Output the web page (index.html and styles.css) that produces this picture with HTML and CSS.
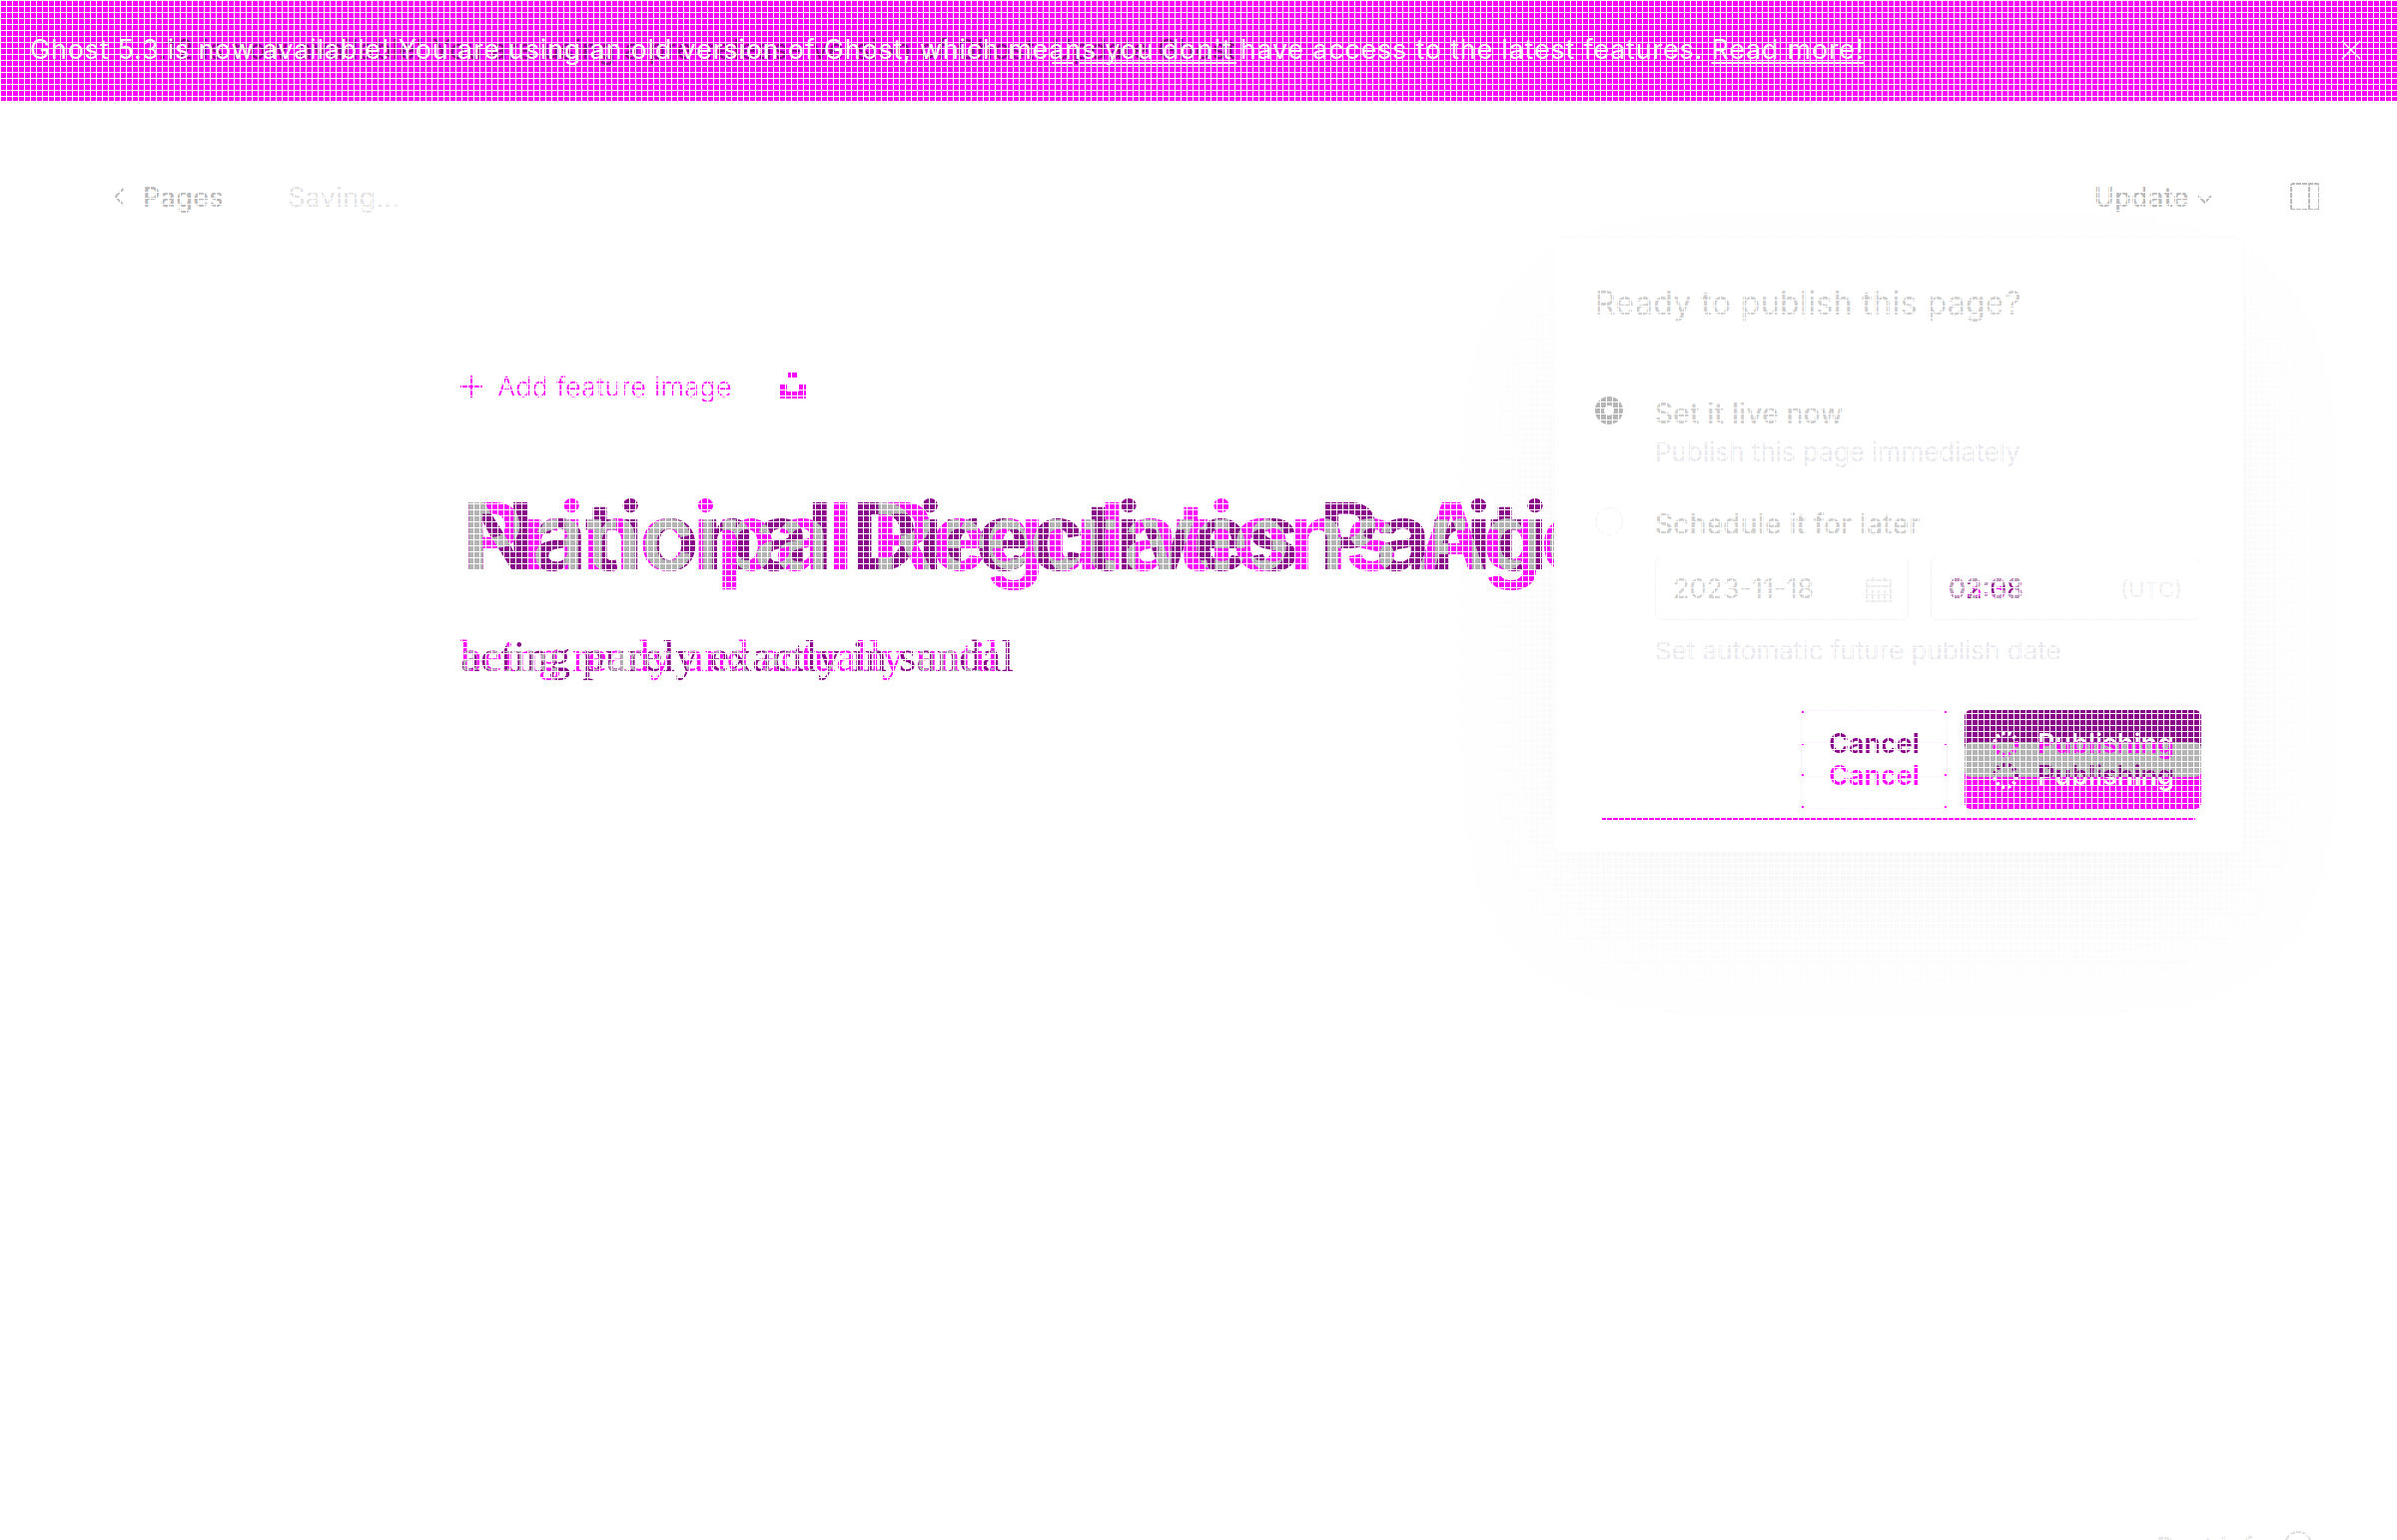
FILE: index.html
```html
<!DOCTYPE html>
<html lang="en">
<head>
  <meta charset="UTF-8">
  <title>Ready to publish this page?</title>
  <link rel="stylesheet" href="styles.css">
</head>
<body>

<!-- maps red = old ink, blue = new ink to the purple / magenta / grey of the diff -->
<svg class="defs" width="0" height="0" aria-hidden="true">
  <filter id="diff" x="0" y="0" width="1" height="1" color-interpolation-filters="sRGB">
    <feColorMatrix in="SourceGraphic" values="1 0 0 0 0  1 0 0 0 0  1 0 0 0 0  0 0 0 1 0" result="aa"/>
    <feColorMatrix in="SourceGraphic" values="0 0 1 0 0  0 0 1 0 0  0 0 1 0 0  0 0 0 1 0" result="bb"/>
    <feComposite in="aa" in2="bb" operator="arithmetic" k1="1" k2="0" k3="0" k4="0" result="both"/>
    <feColorMatrix in="both" values="0 0 0 0 0  0 1 0 0 0  0 0 0 0 0  0 0 0 1 0" result="green"/>
    <feComposite in="SourceGraphic" in2="green" operator="arithmetic" k1="0" k2="1" k3="1" k4="0" result="mix"/>
    <feColorMatrix in="mix" values="-.455 .161 0 0 1  -1 1.706 -1 0 1  -.455 .161 0 0 1  0 0 0 1 0"/>
  </filter>
</svg>

<div class="banner">
  <div class="stack banner-text">
    <p class="old">Ghost 5.3.12 is now available! You are using a pre-release version of Ghost. <u>Update Ghost</u></p>
    <p class="new">Ghost 5.3 is now available! You are using an old version of Ghost, which means you don't have access to the latest features. <u>Read more!</u></p>
  </div>
  <svg class="banner-close" viewBox="0 0 22 22"><path d="M1 1l20 20M21 1L1 21"/></svg>
</div>

<header class="topbar">
  <div class="topbar-left">
    <svg class="back" viewBox="0 0 10 18"><path d="M9 1L1 9l8 8"/></svg>
    <span class="back-label">Pages</span>
    <span class="saving">Saving...</span>
  </div>
  <div class="topbar-right">
    <span class="update">Update</span>
    <svg class="update-caret" viewBox="0 0 14 9"><path d="M1 1l6 6 6-6"/></svg>
    <svg class="sidebar-toggle" viewBox="0 0 30 28"><rect x="1" y="1" width="28" height="26" rx="2"/><path d="M19 1v26"/></svg>
  </div>
</header>

<main class="editor ink">
  <div class="feature new">
    <svg class="feature-plus" viewBox="0 0 22 22"><path d="M11 0v22M0 11h22"/></svg>
    <span>Add feature image</span>
    <svg class="feature-icon" viewBox="0 0 26 27"><path d="M8 0h9v6H8zM0 12h7v8h12v-8h7v15H0z"/></svg>
  </div>
  <div class="stack title">
    <h1 class="old">National Directives Parities</h1>
    <h1 class="new">Principal Regulations Agencies</h1>
  </div>
  <div class="stack lead">
    <p class="old">acting purely exactly in sandal</p>
    <p class="new">being ready and actually until</p>
  </div>
</main>

<aside class="publish">
  <h2 class="publish-title">Ready to publish this page?</h2>
  <div class="publish-body">
    <div class="option">
      <span class="radio radio-on"></span>
      <div>
        <div class="option-name">Set it live now</div>
        <div class="option-desc">Publish this page immediately</div>
      </div>
    </div>
    <div class="option option-later">
      <span class="radio"></span>
      <div>
        <div class="option-name">Schedule it for later</div>
        <div class="fields">
          <div class="field field-date">
            <span>2023-11-18</span>
            <svg class="calendar" viewBox="0 0 26 26"><path d="M1 4h24v21H1zM1 10h24M7 1v5M19 1v5M7 14v9M13 14v9M19 14v9M1 18h24"/></svg>
          </div>
          <div class="field field-time">
            <span class="stack ink time">
              <span class="old">02:08</span>
              <span class="new">03:33</span>
            </span>
            <span class="utc">(UTC)</span>
          </div>
        </div>
        <div class="option-desc option-hint">Set automatic future publish date</div>
      </div>
    </div>
  </div>
  <div class="publish-foot ink stack">
    <div class="foot-row old">
      <button class="btn-cancel">Cancel</button>
      <button class="btn-publish">
        <svg class="spinner" viewBox="0 0 28 28"><circle cx="14" cy="14" r="11" stroke-dasharray="3 3"/></svg>
        Publishing
      </button>
    </div>
    <div class="foot-row foot-row-new new">
      <button class="btn-cancel">Cancel</button>
      <button class="btn-publish">
        <svg class="spinner" viewBox="0 0 28 28"><circle cx="14" cy="14" r="11" stroke-dasharray="3 3"/></svg>
        Publishing
      </button>
    </div>
  </div>
</aside>

<footer class="page-foot">
  <span>Post info</span>
  <svg class="help" viewBox="0 0 28 28"><circle cx="14" cy="14" r="13"/></svg>
</footer>

<div class="lattice"></div>

</body>
</html>
```

FILE: styles.css
```css
html, body {
  margin: 0;
  height: 100%;
  overflow: hidden;
}
body {
  position: relative;
  background: #fff;
  font-family: Inter, "Noto Sans", sans-serif;
  font-size: 27px;
  color: #bbb;
}
p, h1, h2 {
  margin: 0;
  font: inherit;
}
.defs {
  position: absolute;
}
.stack {
  display: grid;
}
.stack > * {
  grid-area: 1 / 1;
  white-space: nowrap;
}

/* diff layers */
.ink {
  background: #000;
  filter: url(#diff);
}
.ink .old {
  color: #f00;
}
.ink .new {
  color: #00f;
  mix-blend-mode: screen;
}

/* white grid over the whole shot */
.lattice {
  position: absolute;
  inset: 0;
  pointer-events: none;
  background-image:
    repeating-linear-gradient(to right, #fff 0 1px, transparent 1px 6px),
    repeating-linear-gradient(to bottom, #fff 0 1px, transparent 1px 6px);
}

/* banner */
.banner {
  display: flex;
  justify-content: space-between;
  align-items: center;
  height: 101px;
  padding: 0 36px 2px 30px;
  box-sizing: border-box;
  background: #f0f;
}
.banner-text {
  line-height: 34px;
  letter-spacing: .77px;
}
.banner-text .old {
  color: #8b008b;
}
.banner-text .new {
  color: #fff;
}
.banner-text u {
  text-underline-offset: 3px;
  text-decoration-thickness: 2px;
  text-decoration-color: #fff;
}
.banner-close {
  width: 20px;
  height: 22px;
  fill: none;
  stroke: #fff;
  stroke-width: 1.5;
}

/* top bar */
.topbar {
  display: flex;
  justify-content: space-between;
  align-items: center;
  height: 192px;
  padding: 0 77px 0 114px;
  box-sizing: border-box;
  font-weight: 500;
  letter-spacing: .3px;
}
.topbar-left,
.topbar-right {
  display: flex;
  align-items: center;
}
.back {
  width: 11px;
  height: 18px;
  margin-right: 18px;
  fill: none;
  stroke: #bbb;
  stroke-width: 2;
}
.saving {
  margin-left: 64px;
  font-weight: 400;
  color: #e2e2e2;
}
.update-caret {
  width: 15px;
  height: 10px;
  margin: 6px 78px 0 8px;
  fill: none;
  stroke: #bbb;
  stroke-width: 2;
}
.sidebar-toggle {
  width: 30px;
  height: 28px;
  fill: none;
  stroke: #bbb;
  stroke-width: 2;
}

/* editor */
.editor {
  display: flex;
  flex-direction: column;
  height: 600px;
  padding: 82px 0 0 461px;
  box-sizing: border-box;
}
.feature {
  display: flex;
  align-items: center;
  height: 24px;
  font-size: 27px;
  font-weight: 300;
  letter-spacing: .25px;
  color: #00f;
}
.feature-plus {
  width: 22px;
  height: 22px;
  margin-right: 15px;
  fill: none;
  stroke: #00f;
  stroke-width: 2;
}
.feature-icon {
  width: 26px;
  height: 27px;
  margin: 0 0 4px 48px;
  fill: #00f;
}
.title {
  margin-top: 80px;
  margin-left: 2px;
  font-size: 94px;
  font-weight: 700;
  line-height: 116px;
  letter-spacing: -1.7px;
}
.lead {
  margin-top: 35px;
  font-family: "Liberation Serif", serif;
  font-size: 44px;
  line-height: 56px;
  letter-spacing: .55px;
}

/* publish panel */
.publish {
  position: absolute;
  top: 238px;
  left: 1556px;
  width: 690px;
  height: 614px;
  background: #fff;
  box-shadow: 0 70px 160px rgba(0, 0, 0, .035), 0 0 4px rgba(0, 0, 0, .03);
  border-radius: 6px;
}
.publish-title {
  height: 117px;
  padding: 46px 41px 0;
  box-sizing: border-box;
  border-bottom: 1px solid #f7f7f7;
  font-size: 32px;
  line-height: 40px;
  letter-spacing: .4px;
  color: #cfcfcf;
}
.publish-body {
  height: 354px;
  padding: 41px 41px 0;
  box-sizing: border-box;
  border-bottom: 1px solid #f7f7f7;
}
.option {
  display: flex;
  gap: 32px;
}
.option-later {
  margin-top: 36px;
}
.radio {
  flex: none;
  width: 28px;
  height: 28px;
  margin-top: 1px;
  box-sizing: border-box;
  border: 1px solid #f0f0f0;
  border-radius: 50%;
}
.radio-on {
  border: 9px solid #b6b6b6;
}
.option-name {
  font-weight: 500;
  font-size: 28px;
  line-height: 36px;
  letter-spacing: .2px;
  color: #cfcfcf;
}
.option-desc {
  margin-top: 3px;
  font-size: 26px;
  line-height: 36px;
  color: #e8e8ee;
}
.option-hint {
  margin-top: 13px;
}
.fields {
  display: flex;
  gap: 22px;
  margin: 15px 0 5px;
}
.field {
  display: flex;
  justify-content: space-between;
  align-items: center;
  height: 63px;
  padding: 0 17px;
  box-sizing: border-box;
  border: 1px solid #f4f4f4;
  border-radius: 6px;
  color: #d2d2d2;
}
.field-date {
  width: 254px;
}
.field-time {
  width: 270px;
}
.calendar {
  width: 26px;
  height: 26px;
  margin-right: -1px;
  fill: none;
  stroke: #e8e8e8;
  stroke-width: 1.5;
}
.utc {
  font-size: 22px;
  color: #eee;
}

/* panel buttons, two versions 32px apart */
.publish-foot {
  height: 143px;
  border-radius: 0 0 6px 6px;
  overflow: hidden;
}
.foot-row {
  display: flex;
  justify-content: flex-end;
  align-items: flex-start;
  gap: 17px;
  padding: 2px 42px 0;
  height: 100%;
  box-sizing: border-box;
}
.foot-row-new {
  padding-top: 34px;
  position: relative;
}
.foot-row-new::after {
  content: "";
  position: absolute;
  left: 48px;
  right: 48px;
  top: 110px;
  height: 2px;
  background: #00f;
}
button {
  font: inherit;
  font-weight: 600;
  height: 67px;
  border: 0;
  border-radius: 6px;
  padding: 0;
  background: none;
}
/* faint outline, corners come out as magenta ticks */
.btn-cancel {
  width: 147px;
  color: inherit;
  border: 1px solid #060006;
  border-radius: 0;
  background:
    linear-gradient(#00f, #00f) 0 0 / 2px 2px no-repeat,
    linear-gradient(#00f, #00f) 100% 0 / 2px 2px no-repeat,
    linear-gradient(#00f, #00f) 0 100% / 2px 2px no-repeat,
    linear-gradient(#00f, #00f) 100% 100% / 2px 2px no-repeat;
}
.btn-publish {
  display: flex;
  align-items: center;
  justify-content: center;
  gap: 18px;
  width: 237px;
  color: #000;
}
.old .btn-publish {
  background: #f00;
}
.new .btn-publish {
  background: #00f;
}
.spinner {
  width: 28px;
  height: 28px;
  fill: none;
  stroke: #000;
  stroke-width: 4;
}

/* bottom right, mostly cut off by the window */
.page-foot {
  position: absolute;
  top: 1533px;
  right: 85px;
  display: flex;
  gap: 16px;
  color: #e4e4e4;
}
.page-foot span {
  margin-top: 0;
}
.help {
  width: 28px;
  height: 28px;
  fill: none;
  stroke: #ddd;
  stroke-width: 2;
}
```
